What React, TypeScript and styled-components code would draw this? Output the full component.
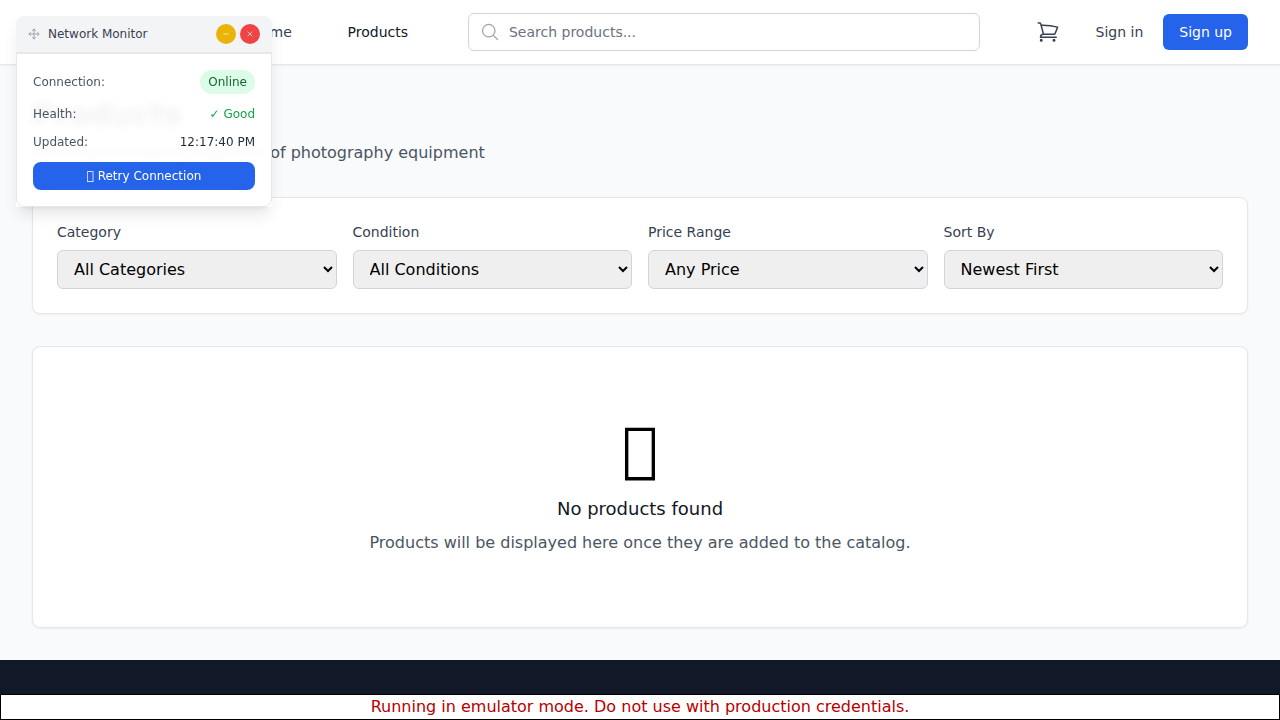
import React from 'react';
import styled, { createGlobalStyle } from 'styled-components';
import { HiOutlineShoppingCart, HiOutlineMagnifyingGlass } from 'react-icons/hi2';

const Global = createGlobalStyle`
  *, *::before, *::after { box-sizing: border-box; }
  body { margin: 0; background: #f9fafb; overflow: hidden; font-family: "DejaVu Sans", sans-serif; font-size: 16px; line-height: 24px; color: #111827; }
  h1, h2, p { margin: 0; font-weight: 400; }
  button, input, select { font: inherit; margin: 0; }
`;
const Page = styled.div`height: 720px; overflow: hidden; display: flex; flex-direction: column;`;
const Header = styled.header`
  flex: none; height: 65px; background: #fff; border-bottom: 1px solid #e5e7eb;
  box-shadow: 0 1px 2px rgba(0,0,0,.05); padding: 0 32px; display: flex; align-items: center;
  font-size: 14px; line-height: 20px;
`;
const Brand = styled.span`width: 218.5px;`;
const NavLink = styled.a<{ $active?: boolean; $width: number }>`
  width: ${p => p.$width}px; color: ${p => (p.$active ? '#111827' : '#374151')};
`;
const Search = styled.label`
  width: 512px; height: 38px; display: flex; align-items: center; gap: 9px; padding: 0 11px;
  border: 1px solid #d1d5db; border-radius: 6px; color: #9ca3af; background: #fff;
  input { flex: 1; border: 0; padding: 0; outline: 0; background: transparent; font-size: 14px; line-height: 20px; }
  input::placeholder { color: #6b7280; }
`;
const Account = styled.div`margin-left: auto; display: flex; align-items: center; color: #374151;`;
const SignIn = styled.a`margin: 0 20px 0 36px;`;
const SignUp = styled.a`padding: 8px 16px; border-radius: 6px; background: #2563eb; color: #fff;`;
const Main = styled.main`flex: none; height: 595px; padding: 32px;`;
const Title = styled.h1`font-size: 30px; line-height: 36px; font-weight: 700;`;
const Subtitle = styled.p`margin: 8px 0 32px; color: #4b5563;`;
const Card = styled.section`
  background: #fff; border: 1px solid #e5e7eb; border-radius: 8px; box-shadow: 0 1px 2px rgba(0,0,0,.05);
`;
const Filters = styled(Card)`display: grid; grid-template-columns: repeat(4, 1fr); gap: 16px; padding: 24px; height: 117px;`;
const Field = styled.label`display: flex; flex-direction: column; gap: 8px; font-size: 14px; line-height: 20px; color: #374151;`;
const Select = styled.select`
  width: 100%; height: 39px; padding: 8px 12px; border: 1px solid #d1d5db; border-radius: 6px;
  background-color: #efefef; color: #000; font-size: 16px;
`;
const Empty = styled(Card)`
  margin-top: 32px; height: 282px; padding: 72px 0; display: flex; flex-direction: column; align-items: center;
`;
const EmptyGlyph = styled.div`font-size: 60px; line-height: 60px; margin-bottom: 16px; color: #000;`;
const EmptyTitle = styled.h2`font-size: 18px; line-height: 28px; margin-bottom: 8px;`;
const EmptyText = styled.p`color: #4b5563;`;
const Footer = styled.footer`flex: 1; background: #111827;`;
const Notice = styled.p`
  position: fixed; left: 0; right: 0; bottom: 0; height: 26px; border: 1px solid #000; background: #fff;
  color: #b50000; text-align: center; line-height: 24px;
`;
const Monitor = styled.aside`
  position: fixed; left: 16px; top: 16px; width: 256px; font-size: 12px; line-height: 16px;
  background: rgba(255,255,255,.95); backdrop-filter: blur(4px);
  box-shadow: 0 10px 15px -3px rgba(0,0,0,.1), 0 4px 6px -4px rgba(0,0,0,.1);
`;
const MonitorBar = styled.div`
  display: flex; align-items: center; padding: 8px 12px; background: #f3f4f6; color: #374151;
  border-bottom: 1px solid #e5e7eb; border-radius: 8px 8px 0 0;
`;
const MonitorTitle = styled.span`margin-left: 8px; flex: 1;`;
const Round = styled.button<{ $color: string }>`
  width: 20px; height: 20px; margin-left: 4px; padding: 0; border: 0; border-radius: 50%; color: #fff;
  background: ${p => p.$color}; display: flex; align-items: center; justify-content: center;
`;
const MonitorBody = styled.div`
  display: flex; flex-direction: column; gap: 12px; padding: 16px;
  border: 1px solid #e5e7eb; border-radius: 0 0 8px 8px;
`;
const Stat = styled.div`display: flex; justify-content: space-between; align-items: center; color: #4b5563;`;
const Pill = styled.span`padding: 4px 8px; border-radius: 12px; background: #dcfce7; color: #166534;`;
const Value = styled.span<{ $good?: boolean }>`color: ${p => (p.$good ? '#16a34a' : '#1f2937')};`;
const Retry = styled.button`height: 28px; padding: 0; border: 0; border-radius: 8px; background: #2563eb; color: #fff;`;

const filters = [
  ['Category', 'All Categories'],
  ['Condition', 'All Conditions'],
  ['Price Range', 'Any Price'],
  ['Sort By', 'Newest First'],
];

export default function App() {
  return (
    <Page>
      <Global />
      <Header>
        <Brand />
        <NavLink $width={97.1}>Home</NavLink>
        <NavLink $width={120.4} $active>Products</NavLink>
        <Search>
          <HiOutlineMagnifyingGlass size={20} />
          <input placeholder="Search products..." />
        </Search>
        <Account>
          <HiOutlineShoppingCart size={24} />
          <SignIn>Sign in</SignIn>
          <SignUp>Sign up</SignUp>
        </Account>
      </Header>
      <Main>
        <Title>Products</Title>
        <Subtitle>Discover our latest collection of photography equipment</Subtitle>
        <Filters>
          {filters.map(([label, value]) => (
            <Field key={label}>
              {label}
              <Select defaultValue={value}><option>{value}</option></Select>
            </Field>
          ))}
        </Filters>
        <Empty>
          <EmptyGlyph>{'\u{10FFFD}'}</EmptyGlyph>
          <EmptyTitle>No products found</EmptyTitle>
          <EmptyText>Products will be displayed here once they are added to the catalog.</EmptyText>
        </Empty>
      </Main>
      <Footer />
      <Monitor>
        <MonitorBar>
          <svg width="12" height="12" viewBox="0 0 24 24" fill="none" stroke="#9ca3af" strokeWidth="2" strokeLinecap="round" strokeLinejoin="round">
            <path d="M12 2v20M2 12h20M9 5l3-3 3 3M9 19l3 3 3-3M5 9l-3 3 3 3M19 9l3 3-3 3" />
          </svg>
          <MonitorTitle>Network Monitor</MonitorTitle>
          <Round $color="#eab308">
            <svg width="8" height="8" viewBox="0 0 24 24" fill="none" stroke="currentColor" strokeWidth="2"><path d="M4 12h16" /></svg>
          </Round>
          <Round $color="#ef4444">
            <svg width="8" height="8" viewBox="0 0 24 24" fill="none" stroke="currentColor" strokeWidth="2"><path d="M5 5l14 14M19 5L5 19" /></svg>
          </Round>
        </MonitorBar>
        <MonitorBody>
          <Stat>Connection:<Pill>Online</Pill></Stat>
          <Stat>Health:<Value $good>✓ Good</Value></Stat>
          <Stat>Updated:<Value>12:17:40 PM</Value></Stat>
          <Retry>{'\u{10FFFD}'} Retry Connection</Retry>
        </MonitorBody>
      </Monitor>
      <Notice>Running in emulator mode. Do not use with production credentials.</Notice>
    </Page>
  );
}
